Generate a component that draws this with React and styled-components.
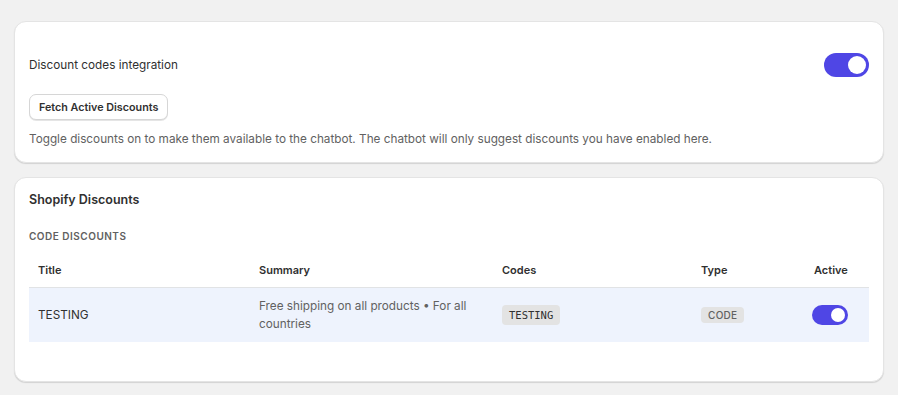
import { useState } from "react";
import styled, { createGlobalStyle } from "styled-components";

const GlobalStyle = createGlobalStyle`
  body {
    margin: 0;
    background: #f1f1f1;
    font-family: Inter, "Noto Sans", sans-serif;
    color: #303030;
  }
`;

const discounts = [
  {
    id: 1,
    title: "TESTING",
    summary: "Free shipping on all products • For all countries",
    code: "TESTING",
    type: "CODE",
    active: true,
  },
];

function App() {
  const [enabled, setEnabled] = useState(true);
  const [active, setActive] = useState({ 1: true });

  return (
    <>
      <GlobalStyle />
      <Page>
        <Card $top={15} $bottom={14}>
          <SettingRow>
            <Label>Discount codes integration</Label>
            <Toggle $on={enabled} onClick={() => setEnabled(!enabled)} />
          </SettingRow>
          <Button>Fetch Active Discounts</Button>
          <Hint>
            Toggle discounts on to make them available to the chatbot. The chatbot will only
            suggest discounts you have enabled here.
          </Hint>
        </Card>

        <Card $top={14} $bottom={39}>
          <CardTitle>Shopify Discounts</CardTitle>
          <SectionLabel>Code discounts</SectionLabel>
          <Table>
            <colgroup>
              <col style={{ width: 221 }} />
              <col style={{ width: 243 }} />
              <col style={{ width: 199 }} />
              <col style={{ width: 113 }} />
              <col />
            </colgroup>
            <thead>
              <tr>
                <Th>Title</Th>
                <Th>Summary</Th>
                <Th>Codes</Th>
                <Th>Type</Th>
                <Th>Active</Th>
              </tr>
            </thead>
            <tbody>
              {discounts.map((d) => (
                <Row key={d.id}>
                  <Td>{d.title}</Td>
                  <Td $muted>{d.summary}</Td>
                  <Td>
                    <CodeBadge>{d.code}</CodeBadge>
                  </Td>
                  <Td>
                    <TypeBadge>{d.type}</TypeBadge>
                  </Td>
                  <Td>
                    <Toggle
                      $small
                      $on={active[d.id]}
                      onClick={() => setActive({ ...active, [d.id]: !active[d.id] })}
                    />
                  </Td>
                </Row>
              ))}
            </tbody>
          </Table>
        </Card>
      </Page>
    </>
  );
}

export default App;

const Page = styled.div`
  padding: 21px 14px;
  display: flex;
  flex-direction: column;
  gap: 14px;
`;

const Card = styled.section`
  background: #fff;
  border: 1px solid #e4e4e4;
  border-radius: 12px;
  box-shadow: 0 1px 1px rgba(0, 0, 0, 0.13);
  padding: ${(p) => p.$top}px 14px ${(p) => p.$bottom}px;
`;

const SettingRow = styled.div`
  display: flex;
  align-items: center;
  justify-content: space-between;
  padding: 16px 0 17px;
`;

const Label = styled.span`
  font-size: 11.75px;
  line-height: 18px;
`;

const Toggle = styled.button`
  position: relative;
  display: block;
  width: ${(p) => (p.$small ? 36 : 45)}px;
  height: ${(p) => (p.$small ? 20 : 24)}px;
  margin-left: ${(p) => (p.$small ? -2 : 0)}px;
  border: none;
  border-radius: 999px;
  padding: 0;
  cursor: pointer;
  background: ${(p) => (p.$on ? "#4f46e5" : "#d1d5db")};

  &::after {
    content: "";
    position: absolute;
    top: 3px;
    left: ${(p) => (p.$on ? (p.$small ? 19 : 24) : 3)}px;
    width: ${(p) => (p.$small ? 14 : 18)}px;
    height: ${(p) => (p.$small ? 14 : 18)}px;
    border-radius: 50%;
    background: #fff;
  }
`;

const Button = styled.button`
  display: block;
  height: 26px;
  padding: 0 9px;
  background: #fff;
  border: 1px solid #d6d6d6;
  border-radius: 7px;
  box-shadow: 0 1px 0 rgba(0, 0, 0, 0.1);
  font-family: inherit;
  font-size: 10.75px;
  font-weight: 600;
  color: #303030;
  cursor: pointer;
`;

const Hint = styled.p`
  margin: 10px 0 0;
  font-size: 11.75px;
  line-height: 18px;
  color: #616161;
`;

const CardTitle = styled.h2`
  margin: 0;
  font-size: 12.5px;
  line-height: 16px;
  font-weight: 600;
`;

const SectionLabel = styled.h3`
  margin: 21px 0 0;
  font-size: 10px;
  line-height: 14px;
  font-weight: 600;
  letter-spacing: 0.5px;
  text-transform: uppercase;
  color: #616161;
`;

const Table = styled.table`
  width: 100%;
  margin-top: 10px;
  border-collapse: collapse;
  table-layout: fixed;
`;

const Th = styled.th`
  text-align: left;
  padding: 9px 9px;
  font-size: 11px;
  line-height: 16px;
  font-weight: 600;
  color: #303030;
  border-bottom: 1px solid #e1e3e5;
`;

const Row = styled.tr`
  height: 54px;
  background: #eef3fd;
`;

const Td = styled.td`
  padding: 9px 9px;
  font-size: 11.75px;
  line-height: 18px;
  vertical-align: middle;
  color: ${(p) => (p.$muted ? "#616161" : "#303030")};
`;

const CodeBadge = styled.span`
  display: inline-block;
  padding: 2px 7px;
  border-radius: 4px;
  background: #e3e3e3;
  font-family: "DejaVu Sans Mono", "Liberation Mono", monospace;
  font-size: 10.5px;
  line-height: 16px;
  color: #303030;
`;

const TypeBadge = styled.span`
  display: inline-block;
  padding: 0 7px;
  border-radius: 4px;
  background: #e3e3e3;
  font-size: 10px;
  font-weight: 500;
  line-height: 16px;
  letter-spacing: 0.3px;
  color: #616161;
`;
